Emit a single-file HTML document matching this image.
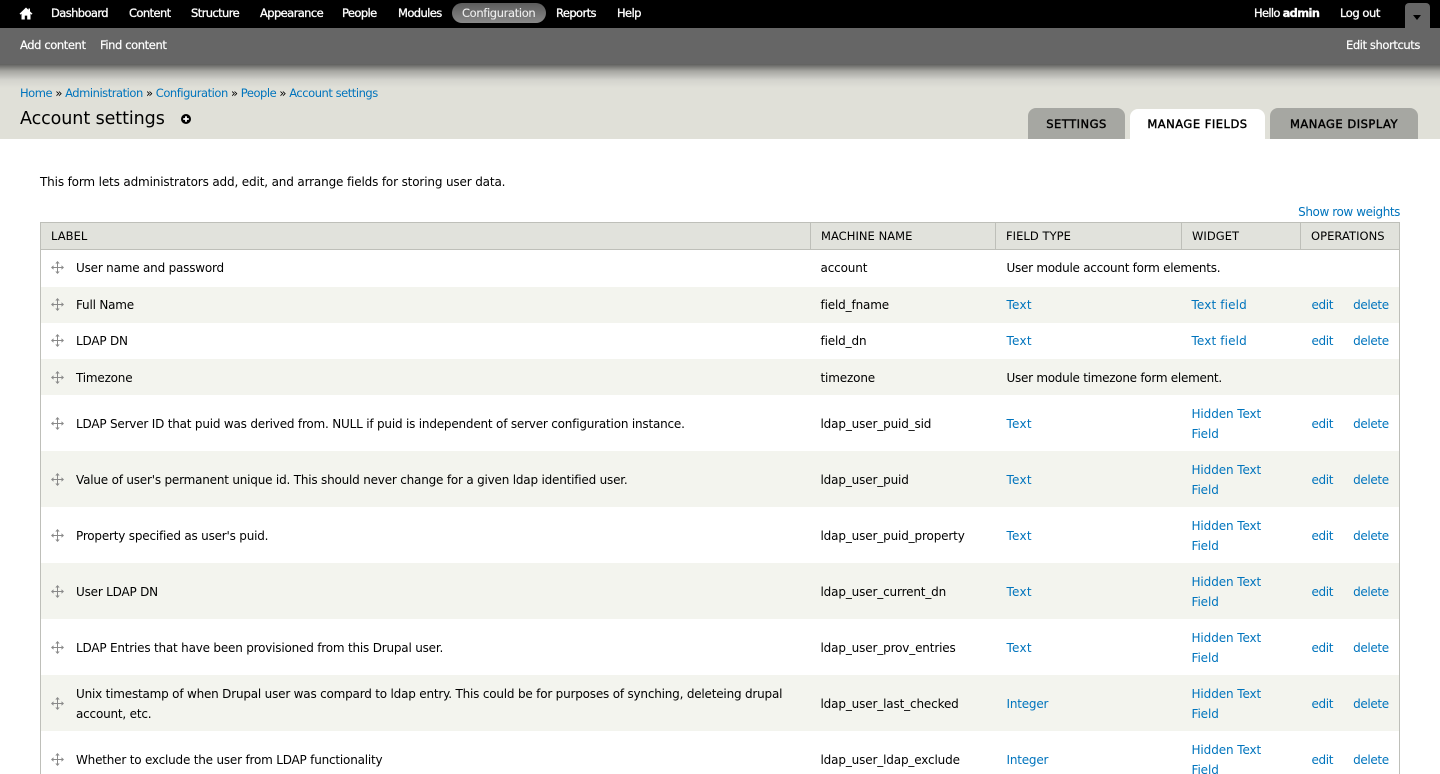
<!DOCTYPE html>
<html><head><meta charset="utf-8"><title>Account settings</title>
<style>
*{box-sizing:border-box}
html,body{margin:0;padding:0;background:#fff;color:#000;font:12px/18px "DejaVu Sans",sans-serif;letter-spacing:-.2px}
#page{position:relative;width:1440px;height:774px;overflow:hidden;background:#fff}
a{color:#0074bd;text-decoration:none}
.abs{position:absolute;white-space:nowrap}
#bar{position:absolute;left:0;top:0;width:1440px;height:28px;background:#000}
#bar a{color:#fff;position:absolute;white-space:nowrap;top:4px;font-size:11.5px;letter-spacing:-.6px;-webkit-text-stroke:.3px #fff}
#sub{position:absolute;left:0;top:28px;width:1440px;height:36px;background:#666}
.s{position:absolute;top:36px;color:#fff;font-size:11.5px;white-space:nowrap;letter-spacing:-.4px;-webkit-text-stroke:.2px #fff}
#pill{position:absolute;left:452px;top:3px;width:94px;height:20px;border-radius:10px;background:linear-gradient(#5c5c5c,#888)}
#tog{position:absolute;left:1405px;top:3px;width:25px;height:25px;background:#666;border-radius:4px 4px 0 0}
#tog i{position:absolute;left:8px;top:12px;border:4.5px solid transparent;border-top:5px solid #000;border-bottom:0}
#head{position:absolute;left:0;top:64px;width:1440px;height:75px;background:linear-gradient(#5f5f5d 0,#a5a5a0 7px,#d3d3cd 16px,#e0e0d8 24px,#e0e0d8 100%)}
.tab{position:absolute;top:108px;height:31px;border-radius:8px 8px 0 0;background:#a6a7a2;text-align:center;font-size:11.5px;letter-spacing:.5px;line-height:33px;-webkit-text-stroke:.4px #000}
table{position:absolute;left:40px;top:222px;width:1360px;border-collapse:collapse;table-layout:fixed;border:1px solid #bebfb9;border-bottom:0}
th{background:#e1e2dc;border:1px solid #bebfb9;height:27px;padding:0 10px;text-align:left;font-weight:400;font-size:11.5px;letter-spacing:.05px}
td{padding:0 10px;vertical-align:middle}
tr.d td{padding-top:2px}
tr.o td{background:#f3f4ee}
td.l{padding-left:35px;position:relative}
td.l svg{position:absolute;left:10px;top:50%;margin-top:-7px}
tr.d td.l svg{margin-top:-6px}
td.m{letter-spacing:-.15px}
td.c{letter-spacing:-.27px;padding-left:11px}
td.t{padding-left:11px}
td.t a{letter-spacing:.25px}
td.t a.i{letter-spacing:-.2px}
td.f a{letter-spacing:.14px}
td.w{line-height:20px}
td.w a{letter-spacing:-.09px}
td.op{padding-left:11px;letter-spacing:-.36px;white-space:nowrap}
.op a+a{margin-left:20px}
</style></head><body>
<div id="page">
<div id="bar">
<svg class="abs" style="left:19px;top:7px" width="14" height="13" viewBox="0 0 14 13"><path fill="#fff" d="M7 0.5 0.5 6.8 1.5 7.6 2.5 6.8V12.5H5.8V8.6H8.2V12.5H11.5V6.8L12.5 7.6 13.5 6.8 11 4.4V1.5H9.5V2.9Z"/></svg>
<div id="pill"></div>
<a style="left:51px">Dashboard</a><a style="left:129px">Content</a><a style="left:191px">Structure</a><a style="left:260px">Appearance</a><a style="left:342px">People</a><a style="left:398px">Modules</a><a style="left:462px;letter-spacing:-.36px;-webkit-text-stroke:.1px #eee;color:#eee">Configuration</a><a style="left:556px">Reports</a><a style="left:617px">Help</a>
<a style="left:1254px;letter-spacing:-.7px">Hello <b>admin</b></a><a style="left:1340px;letter-spacing:-.45px">Log out</a>
</div>
<div id="sub"></div>
<div id="tog"><i></i></div>
<a class="s" style="left:20px">Add content</a><a class="s" style="left:100px">Find content</a><a class="s" style="left:1346px">Edit shortcuts</a>
<div id="head"></div>
<div class="abs" style="left:20px;top:84px;font-size:11.5px;letter-spacing:-.46px"><a href="#">Home</a> » <a href="#">Administration</a> » <a href="#">Configuration</a> » <a href="#">People</a> » <a href="#">Account settings</a></div>
<div class="abs" style="left:20px;top:107px;font-size:17.5px;line-height:24px;letter-spacing:-.08px">Account settings</div>
<svg class="abs" style="left:180px;top:113px" width="12" height="12" viewBox="0 0 12 12"><circle cx="6" cy="6" r="5"/><path d="M6 3.2v5.6M3.2 6h5.600" stroke="#fff" stroke-width="1.8"/></svg>
<div class="tab" style="left:1028px;width:97px">SETTINGS</div>
<div class="tab" style="left:1130px;width:135px;background:#fff;top:109px;height:30px;line-height:31px">MANAGE FIELDS</div>
<div class="tab" style="left:1270px;width:148px">MANAGE DISPLAY</div>
<div class="abs" style="left:40px;top:173px;letter-spacing:-.15px">This form lets administrators add, edit, and arrange fields for storing user data.</div>
<a class="abs" style="right:40px;top:203px;letter-spacing:-.42px">Show row weights</a>
<svg width="0" height="0" style="position:absolute"><defs><g id="d" fill="#8a8a8a"><path d="M6.5 0 8.7 2.5H7V6H10.5V4.3L13 6.5 10.5 8.7V7H7V10.5H8.7L6.5 13 4.3 10.5H6V7H2.5V8.7L0 6.5 2.5 4.3V6H6V2.5H4.3Z"/></g></defs></svg>
<table>
<colgroup><col style="width:770px"><col style="width:185px"><col style="width:186px"><col style="width:119px"><col></colgroup>
<tr><th>LABEL</th><th>MACHINE NAME</th><th>FIELD TYPE</th><th>WIDGET</th><th>OPERATIONS</th></tr>
<tr style="height:37px"><td class="l"><svg width="13" height="13"><use href="#d"/></svg>User name and password</td><td class="m">account</td><td colspan="3" class="c">User module account form elements.</td></tr>
<tr class="o" style="height:36px"><td class="l"><svg width="13" height="13"><use href="#d"/></svg>Full Name</td><td class="m">field_fname</td><td class="t"><a>Text</a></td><td class="f"><a>Text field</a></td><td class="op"><a>edit</a><a>delete</a></td></tr>
<tr style="height:36px"><td class="l"><svg width="13" height="13"><use href="#d"/></svg>LDAP DN</td><td class="m">field_dn</td><td class="t"><a>Text</a></td><td class="f"><a>Text field</a></td><td class="op"><a>edit</a><a>delete</a></td></tr>
<tr class="o d" style="height:36px"><td class="l"><svg width="13" height="13"><use href="#d"/></svg>Timezone</td><td class="m">timezone</td><td colspan="3" class="c">User module timezone form element.</td></tr>
<tr class="d" style="height:56px"><td class="l"><svg width="13" height="13"><use href="#d"/></svg>LDAP Server ID that puid was derived from. NULL if puid is independent of server configuration instance.</td><td class="m">ldap_user_puid_sid</td><td class="t"><a>Text</a></td><td class="w"><a>Hidden Text<br>Field</a></td><td class="op"><a>edit</a><a>delete</a></td></tr>
<tr class="o d" style="height:56px"><td class="l"><svg width="13" height="13"><use href="#d"/></svg>Value of user's permanent unique id. This should never change for a given ldap identified user.</td><td class="m">ldap_user_puid</td><td class="t"><a>Text</a></td><td class="w"><a>Hidden Text<br>Field</a></td><td class="op"><a>edit</a><a>delete</a></td></tr>
<tr class="d" style="height:56px"><td class="l"><svg width="13" height="13"><use href="#d"/></svg>Property specified as user's puid.</td><td class="m">ldap_user_puid_property</td><td class="t"><a>Text</a></td><td class="w"><a>Hidden Text<br>Field</a></td><td class="op"><a>edit</a><a>delete</a></td></tr>
<tr class="o d" style="height:56px"><td class="l"><svg width="13" height="13"><use href="#d"/></svg>User LDAP DN</td><td class="m">ldap_user_current_dn</td><td class="t"><a>Text</a></td><td class="w"><a>Hidden Text<br>Field</a></td><td class="op"><a>edit</a><a>delete</a></td></tr>
<tr class="d" style="height:56px"><td class="l"><svg width="13" height="13"><use href="#d"/></svg>LDAP Entries that have been provisioned from this Drupal user.</td><td class="m">ldap_user_prov_entries</td><td class="t"><a>Text</a></td><td class="w"><a>Hidden Text<br>Field</a></td><td class="op"><a>edit</a><a>delete</a></td></tr>
<tr class="o d" style="height:56px"><td class="l" style="line-height:20px"><svg width="13" height="13"><use href="#d"/></svg>Unix timestamp of when Drupal user was compard to ldap entry. This could be for purposes of synching, deleteing drupal account, etc.</td><td class="m">ldap_user_last_checked</td><td class="t"><a class="i">Integer</a></td><td class="w"><a>Hidden Text<br>Field</a></td><td class="op"><a>edit</a><a>delete</a></td></tr>
<tr class="d" style="height:56px"><td class="l"><svg width="13" height="13"><use href="#d"/></svg>Whether to exclude the user from LDAP functionality</td><td class="m">ldap_user_ldap_exclude</td><td class="t"><a class="i">Integer</a></td><td class="w"><a>Hidden Text<br>Field</a></td><td class="op"><a>edit</a><a>delete</a></td></tr>
</table>
</div>
</body></html>
